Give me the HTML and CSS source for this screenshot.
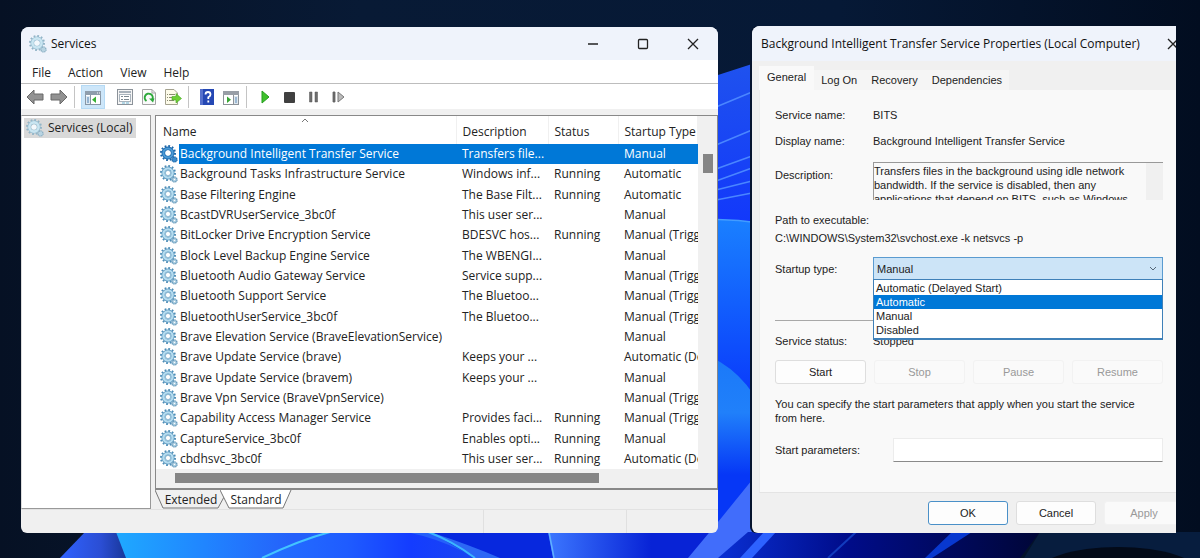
FILE: index.html
```html
<!DOCTYPE html>
<html lang="en">
<head>
    <meta charset="UTF-8">
    <meta name="viewport" content="width=device-width, initial-scale=1.0">
    <title>Services</title>
    <link rel="stylesheet" href="styles.css">
</head>
<body>
    <!-- Shared icons -->
    <svg class="sprite" aria-hidden="true">
        <symbol id="gear" viewBox="0 0 18 18">
            <circle cx="8" cy="8" r="7" fill="none" stroke="#4f8fb8" stroke-width="2" stroke-dasharray="1.8 1.87"/>
            <circle cx="8" cy="8" r="4.6" fill="none" stroke="#5b97bf" stroke-width="3.8"/>
            <circle cx="8" cy="8" r="4.6" fill="none" stroke="#b5dcef" stroke-width="2.4"/>
            <circle cx="8" cy="8" r="2.6" fill="#fff" stroke="#6ba3c6" stroke-width=".7"/>
            <circle cx="14.5" cy="14.5" r="2.6" fill="#a5c9de" stroke="#5d93b6" stroke-width="1.2" stroke-dasharray="1.2 .8"/>
            <circle cx="14.5" cy="14.5" r=".8" fill="#fff"/>
        </symbol>
        <symbol id="gear-on" viewBox="0 0 18 18">
            <circle cx="8" cy="8" r="7" fill="none" stroke="#1c66a8" stroke-width="2" stroke-dasharray="1.8 1.87"/>
            <circle cx="8" cy="8" r="4.6" fill="none" stroke="#1f6cb0" stroke-width="3.8"/>
            <circle cx="8" cy="8" r="4.6" fill="none" stroke="#4c9bd6" stroke-width="2"/>
            <circle cx="8" cy="8" r="2.5" fill="#fff"/>
            <circle cx="14.5" cy="14.5" r="2.6" fill="#3c8ccc" stroke="#1c66a8" stroke-width="1.2" stroke-dasharray="1.2 .8"/>
        </symbol>
        <symbol id="gear-soft" viewBox="0 0 18 18">
            <circle cx="8" cy="8" r="7" fill="none" stroke="#93b5c7" stroke-width="2" stroke-dasharray="1.8 1.87"/>
            <circle cx="8" cy="8" r="4.6" fill="none" stroke="#8eb5ca" stroke-width="3.8"/>
            <circle cx="8" cy="8" r="4.6" fill="none" stroke="#c9e5f1" stroke-width="2.6"/>
            <circle cx="8" cy="8" r="2.6" fill="#f3f8fc"/>
            <circle cx="14.5" cy="14.5" r="2.6" fill="#b9d4e2" stroke="#86abc0" stroke-width="1.2" stroke-dasharray="1.2 .8"/>
        </symbol>
    </svg>

    <!-- Wallpaper -->
    <svg class="wallpaper" viewBox="0 0 1200 558" preserveAspectRatio="none" aria-hidden="true">
        <defs>
            <linearGradient id="sky"><stop offset="0" stop-color="#061124"/><stop offset=".3" stop-color="#081a35"/><stop offset=".7" stop-color="#061936"/><stop offset="1" stop-color="#020d20"/></linearGradient>
            <linearGradient id="petal" x2="0" y2="1"><stop offset="0" stop-color="#1f52ee"/><stop offset="1" stop-color="#1238fb"/></linearGradient>
            <linearGradient id="bloom" x2="0" y2="1"><stop offset="0" stop-color="#1a80ff"/><stop offset=".5" stop-color="#0a3dfb"/><stop offset="1" stop-color="#0a35fb"/></linearGradient>
            <linearGradient id="bloom2" x2="0" y2="1"><stop offset="0" stop-color="#1a78f8"/><stop offset=".3" stop-color="#2080fa"/><stop offset=".6" stop-color="#0637f6"/></linearGradient>
            <linearGradient id="cyan"><stop offset="0" stop-color="#1fa9ff"/><stop offset=".2" stop-color="#2085ff"/><stop offset=".4" stop-color="#2560fa"/></linearGradient>
            <linearGradient id="left"><stop offset="0" stop-color="#2f62ff"/><stop offset=".6" stop-color="#2b4ed4"/><stop offset="1" stop-color="#173595"/></linearGradient>
            <linearGradient id="arc"><stop offset="0" stop-color="#2472ff"/><stop offset=".4" stop-color="#1f5cff"/><stop offset=".7" stop-color="#143cff"/><stop offset="1" stop-color="#1a45f0"/></linearGradient>
            <linearGradient id="wedge"><stop offset="0" stop-color="#3c77ff"/><stop offset=".6" stop-color="#0823d6"/></linearGradient>
            <linearGradient id="night"><stop offset="0" stop-color="#0a30d4"/><stop offset=".4" stop-color="#000c8a"/><stop offset="1" stop-color="#000637"/></linearGradient>
        </defs>
        <rect width="1200" height="558" fill="url(#sky)"/>
        <path d="M690 88L718 75L752 64V225H690z" fill="url(#petal)"/>
        <path d="M716 107L752 92M716 145L752 130M716 169L752 156M716 181L752 168M716 190L752 181M716 200L752 193" fill="none" stroke="#4a86ff" stroke-width="1.5"/>
        <path d="M690 220Q730 218 760 223V558H690z" fill="url(#bloom)"/>
        <path d="M700 220Q730 218 760 223" fill="none" stroke="#429cff" stroke-width="1.5"/>
        <path d="M690 350Q735 360 760 405V558H690z" fill="url(#bloom2)"/>
        <path d="M85 532H117L128 558H60z" fill="url(#left)"/>
        <path d="M116 532H560V558H126z" fill="url(#cyan)"/>
        <path d="M262 558Q375 500 475 558z" fill="url(#arc)"/>
        <path d="M430 532H560V558H475z" fill="#0728de"/>
        <path d="M430 532Q470 545 500 558H475Q455 543 430 532z" fill="#2c68f5"/>
        <path d="M426 531Q454 542 475 558" fill="none" stroke="#3bb4ff" stroke-width="2"/>
        <path d="M262 558Q300 540 330 532" fill="none" stroke="#43c4ff" stroke-width="2"/>
        <path d="M548 532H720L695 558H553z" fill="url(#wedge)"/>
        <path d="M549 532L554 558" stroke="#5fb0ff" stroke-width="1.5"/>
        <path d="M718 522L752 480V532L725 558H688z" fill="#416dfb"/>
        <path d="M748 532H1040L1020 558H718z" fill="url(#night)"/>
        <path d="M764 532L740 558H752L776 532z" fill="#2d62ff"/>
        <path d="M856 532L828 558" stroke="#123bbd" stroke-width="2"/>
        <path d="M952 532L925 558H932L972 532z" fill="#0838cf"/>
        <path d="M1040 532H1200V558H1024z" fill="#071d3e"/>
        <ellipse cx="1118" cy="574" rx="82" ry="27" fill="#030a18"/>
    </svg>

    <main class="desktop">
        <section class="window services">
            <header class="titlebar">
                <svg class="gear"><use href="#gear-soft"/></svg>
                <h1>Services</h1>
                <div class="controls">
                    <button type="button" aria-label="Minimize"><svg viewBox="0 0 12 12"><path d="M1 6H11"/></svg></button>
                    <button type="button" aria-label="Maximize"><svg viewBox="0 0 12 12"><rect x="1.5" y="1.5" width="9" height="9" rx="1"/></svg></button>
                    <button type="button" aria-label="Close"><svg viewBox="0 0 12 12"><path d="M1 1L11 11M11 1L1 11"/></svg></button>
                </div>
            </header>

            <nav class="menu">
                <button type="button">File</button>
                <button type="button">Action</button>
                <button type="button">View</button>
                <button type="button">Help</button>
            </nav>

            <div class="toolbar">
                <button type="button" aria-label="Back"><svg viewBox="0 0 18 18"><path d="M1 9L8 2V6H17V12H8V16z" fill="#929292" stroke="#696969"/></svg></button>
                <button type="button" aria-label="Forward"><svg viewBox="0 0 18 18"><path d="M17 9L10 2V6H1V12H10V16z" fill="#929292" stroke="#696969"/></svg></button>
                <span class="sep"></span>
                <button type="button" class="pressed" aria-label="Show console tree"><svg viewBox="0 0 18 18"><rect x="1.5" y="3.5" width="15" height="13" fill="#fff" stroke="#8796a5"/><path d="M1 3H17V7H1z" fill="#8e9dac"/><path d="M2 8H6V16H2z" fill="#dce8f2"/><path d="M6.500 7V16" stroke="#8796a5"/><path d="M3 10H5M3 12H5M3 14H5" stroke="#4a7eb0"/><path d="M12 8.500V15L8 11.800z" fill="#36b033"/><path d="M13 5H14M15 5H16" stroke="#fff"/></svg></button>
                <button type="button" class="spaced" aria-label="Properties"><svg viewBox="0 0 18 18"><rect x="1.500" y="1.500" width="15" height="15" fill="#f5f5f5" stroke="#8b9299"/><path d="M3 4H15" stroke="#a9b2bb" stroke-width="2"/><rect x="3.500" y="6.500" width="11" height="7" fill="#fff" stroke="#aab4bd"/><path d="M5 8.500H7M8 8.500H13M5 11.500H7M8 11.500H13" stroke="#7d8890"/><path d="M6 15H9M10 15H13" stroke="#6eb6d4"/></svg></button>
                <button type="button" aria-label="Refresh"><svg viewBox="0 0 18 18"><path d="M2.500 1.500H12L15.500 5V16.500H2.500z" fill="#fafafa" stroke="#a4a4a4"/><path d="M12 1.500V5H15.500" fill="none" stroke="#a4a4a4"/><path d="M6.500 13A4 4 0 1 1 12.300 11.500" fill="none" stroke="#2da83a" stroke-width="2"/><path d="M9 10.500L14.500 10.500L13 14.500z" fill="#2da83a"/></svg></button>
                <button type="button" aria-label="Export list"><svg viewBox="0 0 18 18"><path d="M1.500 1.500H10L13.500 5V16.500H1.500z" fill="#fdfbe9" stroke="#a4a28f"/><path d="M3 6.500H4M5 6.500H11M3 9.500H4M5 9.500H9M3 12.500H4M5 12.500H10" stroke="#8b8b72"/><path d="M8 8.500H12V5.500L17.500 10.500L12 15V12H8z" fill="#6ed034" stroke="#45a627" stroke-width=".6"/></svg></button>
                <span class="sep"></span>
                <button type="button" aria-label="Help"><svg viewBox="0 0 18 18"><rect x="2" y="1" width="14" height="16" fill="#2548b4"/><path d="M2 1H5V17H2z" fill="#5570cc"/><path d="M7.500 6.500Q7.500 4 10 4T12.500 6.500Q12.500 8 10.300 9.200V11M10.300 12.500V14.500" fill="none" stroke="#fff" stroke-width="1.800"/></svg></button>
                <button type="button" aria-label="Show action pane"><svg viewBox="0 0 18 18"><rect x="1.500" y="3.500" width="15" height="13" fill="#fff" stroke="#8c9298"/><path d="M1 3H17V7H1z" fill="#989ea6"/><path d="M11.500 7V16" stroke="#8c9298"/><path d="M12 8H16V16H12z" fill="#dfe7ee"/><path d="M13 10H15M13 12H15M13 14H15" stroke="#5b8bb8"/><path d="M5 8.500V15L9 11.800z" fill="#36a533"/></svg></button>
                <span class="sep"></span>
                <button type="button" aria-label="Start service"><svg viewBox="0 0 18 18"><path d="M6 3L13 9L6 15z" fill="#3fc02c" stroke="#259e1f"/></svg></button>
                <button type="button" aria-label="Stop service"><svg viewBox="0 0 18 18"><rect x="4" y="4" width="11" height="11" rx="1" fill="#404040"/></svg></button>
                <button type="button" aria-label="Pause service"><svg viewBox="0 0 18 18"><path d="M5.500 4H8V14H5.500zM11 4H13.500V14H11z" fill="#6d6d6d" stroke="#555" stroke-width=".5"/></svg></button>
                <button type="button" aria-label="Restart service"><svg viewBox="0 0 18 18"><path d="M5 4H7V14H5z" fill="#6d6d6d" stroke="#606060" stroke-width=".8"/><path d="M10 4L16 9L10 14z" fill="#bbb" stroke="#777"/></svg></button>
            </div>

            <div class="panes">
                <aside class="tree">
                    <a class="node" href="#services"><svg class="gear"><use href="#gear-soft"/></svg>Services (Local)</a>
                </aside>

                <div class="view">
                    <div class="list" id="services">
                        <div class="scroller">
                            <table>
                                <colgroup><col class="col-icon"><col class="col-name"><col class="col-desc"><col class="col-status"><col></colgroup>
                                <thead>
                                    <tr><th colspan="2">Name<svg class="sort" viewBox="0 0 8 5"><path d="M1 4L4 1L7 4"/></svg></th><th>Description</th><th>Status</th><th>Startup Type</th></tr>
                                </thead>
                                <tbody>
                                    <tr class="selected"><td><svg class="gear"><use href="#gear-on"/></svg></td><td>Background Intelligent Transfer Service</td><td>Transfers file...</td><td></td><td>Manual</td></tr>
                                    <tr><td><svg class="gear"><use href="#gear"/></svg></td><td>Background Tasks Infrastructure Service</td><td>Windows inf...</td><td>Running</td><td>Automatic</td></tr>
                                    <tr><td><svg class="gear"><use href="#gear"/></svg></td><td>Base Filtering Engine</td><td>The Base Filt...</td><td>Running</td><td>Automatic</td></tr>
                                    <tr><td><svg class="gear"><use href="#gear"/></svg></td><td>BcastDVRUserService_3bc0f</td><td>This user ser...</td><td></td><td>Manual</td></tr>
                                    <tr><td><svg class="gear"><use href="#gear"/></svg></td><td>BitLocker Drive Encryption Service</td><td>BDESVC hos...</td><td>Running</td><td>Manual (Trigg</td></tr>
                                    <tr><td><svg class="gear"><use href="#gear"/></svg></td><td>Block Level Backup Engine Service</td><td>The WBENGI...</td><td></td><td>Manual</td></tr>
                                    <tr><td><svg class="gear"><use href="#gear"/></svg></td><td>Bluetooth Audio Gateway Service</td><td>Service supp...</td><td></td><td>Manual (Trigg</td></tr>
                                    <tr><td><svg class="gear"><use href="#gear"/></svg></td><td>Bluetooth Support Service</td><td>The Bluetoo...</td><td></td><td>Manual (Trigg</td></tr>
                                    <tr><td><svg class="gear"><use href="#gear"/></svg></td><td>BluetoothUserService_3bc0f</td><td>The Bluetoo...</td><td></td><td>Manual (Trigg</td></tr>
                                    <tr><td><svg class="gear"><use href="#gear"/></svg></td><td>Brave Elevation Service (BraveElevationService)</td><td></td><td></td><td>Manual</td></tr>
                                    <tr><td><svg class="gear"><use href="#gear"/></svg></td><td>Brave Update Service (brave)</td><td>Keeps your ...</td><td></td><td>Automatic (De</td></tr>
                                    <tr><td><svg class="gear"><use href="#gear"/></svg></td><td>Brave Update Service (bravem)</td><td>Keeps your ...</td><td></td><td>Manual</td></tr>
                                    <tr><td><svg class="gear"><use href="#gear"/></svg></td><td>Brave Vpn Service (BraveVpnService)</td><td></td><td></td><td>Manual (Trigg</td></tr>
                                    <tr><td><svg class="gear"><use href="#gear"/></svg></td><td>Capability Access Manager Service</td><td>Provides faci...</td><td>Running</td><td>Manual (Trigg</td></tr>
                                    <tr><td><svg class="gear"><use href="#gear"/></svg></td><td>CaptureService_3bc0f</td><td>Enables opti...</td><td>Running</td><td>Manual</td></tr>
                                    <tr><td><svg class="gear"><use href="#gear"/></svg></td><td>cbdhsvc_3bc0f</td><td>This user ser...</td><td>Running</td><td>Automatic (De</td></tr>
                                </tbody>
                            </table>
                        </div>
                        <div class="vscroll"><div class="thumb"></div></div>
                        <div class="hscroll"><div class="thumb"></div></div>
                    </div>
                    <div class="view-tabs">
                        <button type="button"><svg viewBox="0 0 72 20"><path d="M0 0L8 18H63L69 7L66 0" fill="#f0f0f0"/></svg><span>Extended</span></button>
                        <button type="button" class="active"><svg viewBox="0 0 72 20"><path d="M0 0L9 18H63L71 0" fill="#fff"/></svg><span>Standard</span></button>
                    </div>
                </div>
            </div>

            <footer class="statusbar"><span></span><span></span><span></span></footer>
        </section>

        <section class="window dialog">
            <header class="titlebar">
                <h2>Background Intelligent Transfer Service Properties (Local Computer)</h2>
                <button type="button" aria-label="Close"><svg viewBox="0 0 12 12"><path d="M1 1L11 11M11 1L1 11"/></svg></button>
            </header>

            <div class="tabs" role="tablist">
                <button type="button" role="tab" class="active" aria-selected="true">General</button>
                <button type="button" role="tab">Log On</button>
                <button type="button" role="tab">Recovery</button>
                <button type="button" role="tab">Dependencies</button>
            </div>

            <form class="panel">
                <dl class="info">
                    <dt>Service name:</dt><dd>BITS</dd>
                    <dt>Display name:</dt><dd>Background Intelligent Transfer Service</dd>
                </dl>
                <div class="field describe">
                    <label for="description">Description:</label>
                    <textarea id="description" readonly>Transfers files in the background using idle network bandwidth. If the service is disabled, then any applications that depend on BITS, such as Windows</textarea>
                </div>
                <div class="path">
                    <p>Path to executable:</p>
                    <p>C:\WINDOWS\System32\svchost.exe -k netsvcs -p</p>
                </div>
                <div class="field startup">
                    <label for="startup">Startup type:</label>
                    <div class="combo">
                        <select id="startup">
                            <option>Automatic (Delayed Start)</option>
                            <option>Automatic</option>
                            <option selected>Manual</option>
                            <option>Disabled</option>
                        </select>
                        <svg class="arrow" viewBox="0 0 8 6"><path d="M1 1L4 4L7 1"/></svg>
                        <ul class="options" role="listbox" aria-label="Startup type">
                            <li role="option">Automatic (Delayed Start)</li>
                            <li role="option" class="hover" aria-selected="true">Automatic</li>
                            <li role="option">Manual</li>
                            <li role="option">Disabled</li>
                        </ul>
                    </div>
                </div>
                <hr>
                <dl class="info status">
                    <dt>Service status:</dt><dd>Stopped</dd>
                </dl>
                <div class="actions">
                    <button type="button">Start</button>
                    <button type="button" disabled>Stop</button>
                    <button type="button" disabled>Pause</button>
                    <button type="button" disabled>Resume</button>
                </div>
                <p class="hint">You can specify the start parameters that apply when you start the service from here.</p>
                <div class="field params">
                    <label for="params">Start parameters:</label>
                    <input type="text" id="params">
                </div>
            </form>

            <footer class="buttons">
                <button type="button" class="default">OK</button>
                <button type="button">Cancel</button>
                <button type="button" disabled>Apply</button>
            </footer>
        </section>
    </main>
</body>
</html>
```
FILE: styles.css
```css
* {
    box-sizing: border-box;
}
body {
    margin: 0;
    font-family: "Open Sans", "Noto Sans", sans-serif;
    font-size: 12px;
    line-height: 16px;
    color: #222;
    background: #061329;
}
h1, h2, p, dl, dd, ul {
    margin: 0;
    padding: 0;
}
button {
    padding: 0;
    border: none;
    background: none;
    font: inherit;
    color: inherit;
}
.sprite {
    position: absolute;
    width: 0;
    height: 0;
}
.wallpaper {
    position: absolute;
    top: 0;
    left: 0;
    width: 100%;
    height: 100%;
    z-index: -1;
}
.desktop {
    display: grid;
    grid-template-columns: 697fr 424fr;
    gap: 34px;
    height: 100vh;
    min-height: 558px;
    padding: 27px 24px 25px 21px;
}
.window {
    display: flex;
    flex-direction: column;
    min-width: 0;
    overflow: hidden;
    background: #f0f0f0;
    border-radius: 8px 8px 6px 6px;
}
.gear {
    display: block;
    flex: none;
    width: 18px;
    height: 18px;
}

/* Title bars */
.titlebar {
    display: flex;
    align-items: center;
    height: 33px;
    flex: none;
    background: #eff3fb;
}
.titlebar h1, .titlebar h2 {
    font-size: 12px;
    font-weight: normal;
    color: #111;
    white-space: nowrap;
}
.titlebar button svg {
    display: block;
    width: 12px;
    height: 12px;
    margin: auto;
    fill: none;
    stroke: #222;
    stroke-width: 1.3;
}
.services .titlebar {
    padding-left: 8px;
    gap: 4px;
}
.controls {
    display: flex;
    margin-left: auto;
}
.controls button {
    width: 50px;
    height: 32px;
}

/* Menu and toolbar */
.menu {
    display: flex;
    gap: 17px;
    height: 24px;
    flex: none;
    padding: 2px 11px 0;
    background: #fff;
    border-bottom: 1px solid #bdbdbd;
}
.toolbar {
    display: flex;
    align-items: center;
    height: 25px;
    flex: none;
    padding: 0 2px;
    background: #fff;
}
.toolbar button {
    width: 24px;
    height: 24px;
}
.toolbar button svg {
    display: block;
    width: 18px;
    height: 18px;
    margin: auto;
}
.toolbar .pressed {
    background: #cde6f9;
    border: 1px solid #b5daf5;
}
.toolbar .spaced {
    margin-left: 8px;
}
.toolbar .sep {
    width: 1px;
    height: 22px;
    margin: 0 6px 0 3px;
    background: #c4c4c4;
}

/* Panes */
.panes {
    display: flex;
    flex: 1;
    min-height: 0;
    gap: 4px;
    padding-top: 6px;
}
.tree {
    width: 130px;
    flex: none;
    padding: 2px;
    background: #fff;
    border: 1px solid #999;
    border-left-color: #ddd;
}
.node {
    display: inline-flex;
    align-items: center;
    gap: 4px;
    height: 20px;
    padding: 0 3px 0 2px;
    background: #d9d9d9;
    color: inherit;
    text-decoration: none;
    white-space: nowrap;
}
.view {
    display: flex;
    flex-direction: column;
    flex: 1;
    min-width: 0;
}
.list {
    display: grid;
    grid-template-columns: 1fr 19px;
    grid-template-rows: 1fr 19px;
    flex: 1;
    min-height: 0;
    background: #fff;
    border: 1px solid #888;
    border-bottom-width: 2px;
}
.scroller {
    min-width: 0;
    min-height: 0;
    padding-left: 2px;
    overflow: hidden;
}
table {
    width: 100%;
    height: 100%;
    table-layout: fixed;
    border-collapse: collapse;
}
.col-icon {
    width: 21px;
}
.col-name {
    width: 277px;
}
.col-desc {
    width: 92px;
}
.col-status {
    width: 70px;
}
th, td {
    padding: 0 0 0 6px;
    font-weight: normal;
    text-align: left;
    white-space: nowrap;
    overflow: hidden;
}
th {
    position: relative;
    height: 28px;
    padding-top: 4px;
    border-right: 1px solid #f0f0f0;
}
th:first-child {
    padding-left: 5px;
}
td:first-child {
    padding-left: 2px;
}
td:nth-child(2) {
    padding-left: 1px;
}
.sort {
    position: absolute;
    top: 2px;
    left: 48%;
    width: 8px;
    height: 5px;
    fill: none;
    stroke: #777;
}
.selected td:not(:first-child) {
    background: #0078d7;
    color: #fff;
}
.vscroll {
    display: flex;
    flex-direction: column;
    align-items: center;
    padding-top: 38px;
    background: #f0f0f0;
}
.vscroll .thumb {
    width: 10px;
    height: 19px;
    background: #858585;
}
.hscroll {
    grid-column: 1 / -1;
    padding: 4px 19px;
    background: #f0f0f0;
}
.hscroll .thumb {
    width: 81%;
    height: 10px;
    background: #858585;
}
.view-tabs {
    display: flex;
    height: 19px;
    flex: none;
}
.view-tabs button {
    position: relative;
    width: 72px;
    height: 19px;
}
.view-tabs .active {
    margin-left: -7px;
}
.view-tabs svg {
    position: absolute;
    top: 0;
    left: 0;
    width: 72px;
    height: 20px;
    stroke: #777;
}
.view-tabs span {
    position: relative;
}
.statusbar {
    display: grid;
    grid-template-columns: 462fr 143fr 92fr;
    height: 24px;
    flex: none;
    border-top: 1px solid #e2e2e2;
}
.statusbar span + span {
    border-left: 1px solid #e0e0e0;
}

/* Properties dialog */
.dialog {
    margin-top: -1px;
    font-family: "Liberation Sans", Arial, sans-serif;
    font-size: 11px;
    line-height: 14px;
    border-radius: 8px 0 0 6px;
    box-shadow: -2px 0 0 #06142e;
}
.dialog .titlebar {
    justify-content: space-between;
    height: 35px;
    padding-left: 9px;
    margin-right: -3px;
    font-family: "Open Sans", "Noto Sans", sans-serif;
}
.tabs {
    display: flex;
    align-items: flex-end;
    height: 29px;
    flex: none;
    padding-left: 7px;
}
.tabs button {
    height: 20px;
    padding: 0 7px;
    background: #f5f5f5;
}
.tabs .active {
    height: 24px;
    padding: 0 8px 2px;
    background: #f9f9f9;
}
.panel {
    flex: 1;
    margin-left: 7px;
    padding: 18px 13px 0 15px;
    background: #f9f9f9;
    border-left: 1px solid #ececec;
    border-bottom: 1px solid #e4e4e4;
}
.info, .field {
    display: grid;
    grid-template-columns: 98px 1fr;
}
.info {
    row-gap: 12px;
}
.describe {
    margin-top: 14px;
}
.describe label {
    padding-top: 6px;
}
textarea {
    display: block;
    width: 100%;
    height: 38px;
    padding: 1px 18px 0 0;
    border: 1px solid #999;
    border-right: none;
    border-bottom: none;
    background: linear-gradient(to left, #f0f0f0 17px, #f9f9f9 17px);
    font: inherit;
    color: inherit;
    resize: none;
    overflow: hidden;
}
.path {
    display: grid;
    gap: 4px;
    margin-top: 13px;
}
.startup {
    align-items: center;
    margin-top: 12px;
}
.combo {
    position: relative;
}
select {
    display: block;
    width: 100%;
    height: 23px;
    padding: 0 3px;
    appearance: none;
    border: 1px solid #5a9bd0;
    border-radius: 0;
    background: #cce4f7;
    font: inherit;
    color: inherit;
}
.arrow {
    position: absolute;
    top: 9px;
    right: 6px;
    width: 8px;
    height: 6px;
    fill: none;
    stroke: #567;
}
.options {
    position: absolute;
    top: 22px;
    left: 0;
    right: 0;
    padding: 1px 0;
    list-style: none;
    background: #fff;
    border: 1px solid #3f80b8;
    border-bottom-width: 2px;
}
.options li {
    padding-left: 2px;
}
.options .hover {
    background: #0078d7;
    color: #fff;
}
hr {
    margin: 40px 0 0;
    border: none;
    border-top: 1px solid #a8a8a8;
}
.status {
    margin-top: 13px;
}
.actions {
    display: grid;
    grid-template-columns: repeat(4, 1fr);
    gap: 8px;
    margin-top: 12px;
}
.actions button, .buttons button {
    height: 24px;
    background: #fdfdfd;
    border: 1px solid #dedede;
    border-radius: 3px;
}
.actions button:disabled, .buttons button:disabled {
    background: #fafafa;
    border-color: #f2f2f2;
    color: #999;
}
.hint {
    margin-top: 13px;
    padding-right: 8px;
}
.params {
    grid-template-columns: 118px 1fr;
    align-items: center;
    margin-top: 13px;
}
input[type="text"] {
    width: 100%;
    height: 24px;
    border: 1px solid #ececec;
    border-bottom-color: #8a8a8a;
    background: #fff;
    font: inherit;
}
.buttons {
    display: flex;
    justify-content: flex-end;
    align-items: center;
    gap: 8px;
    height: 40px;
    flex: none;
    margin-right: -8px;
}
.buttons button {
    width: 80px;
}
.buttons .default {
    border-color: #4a90c8;
}
```
